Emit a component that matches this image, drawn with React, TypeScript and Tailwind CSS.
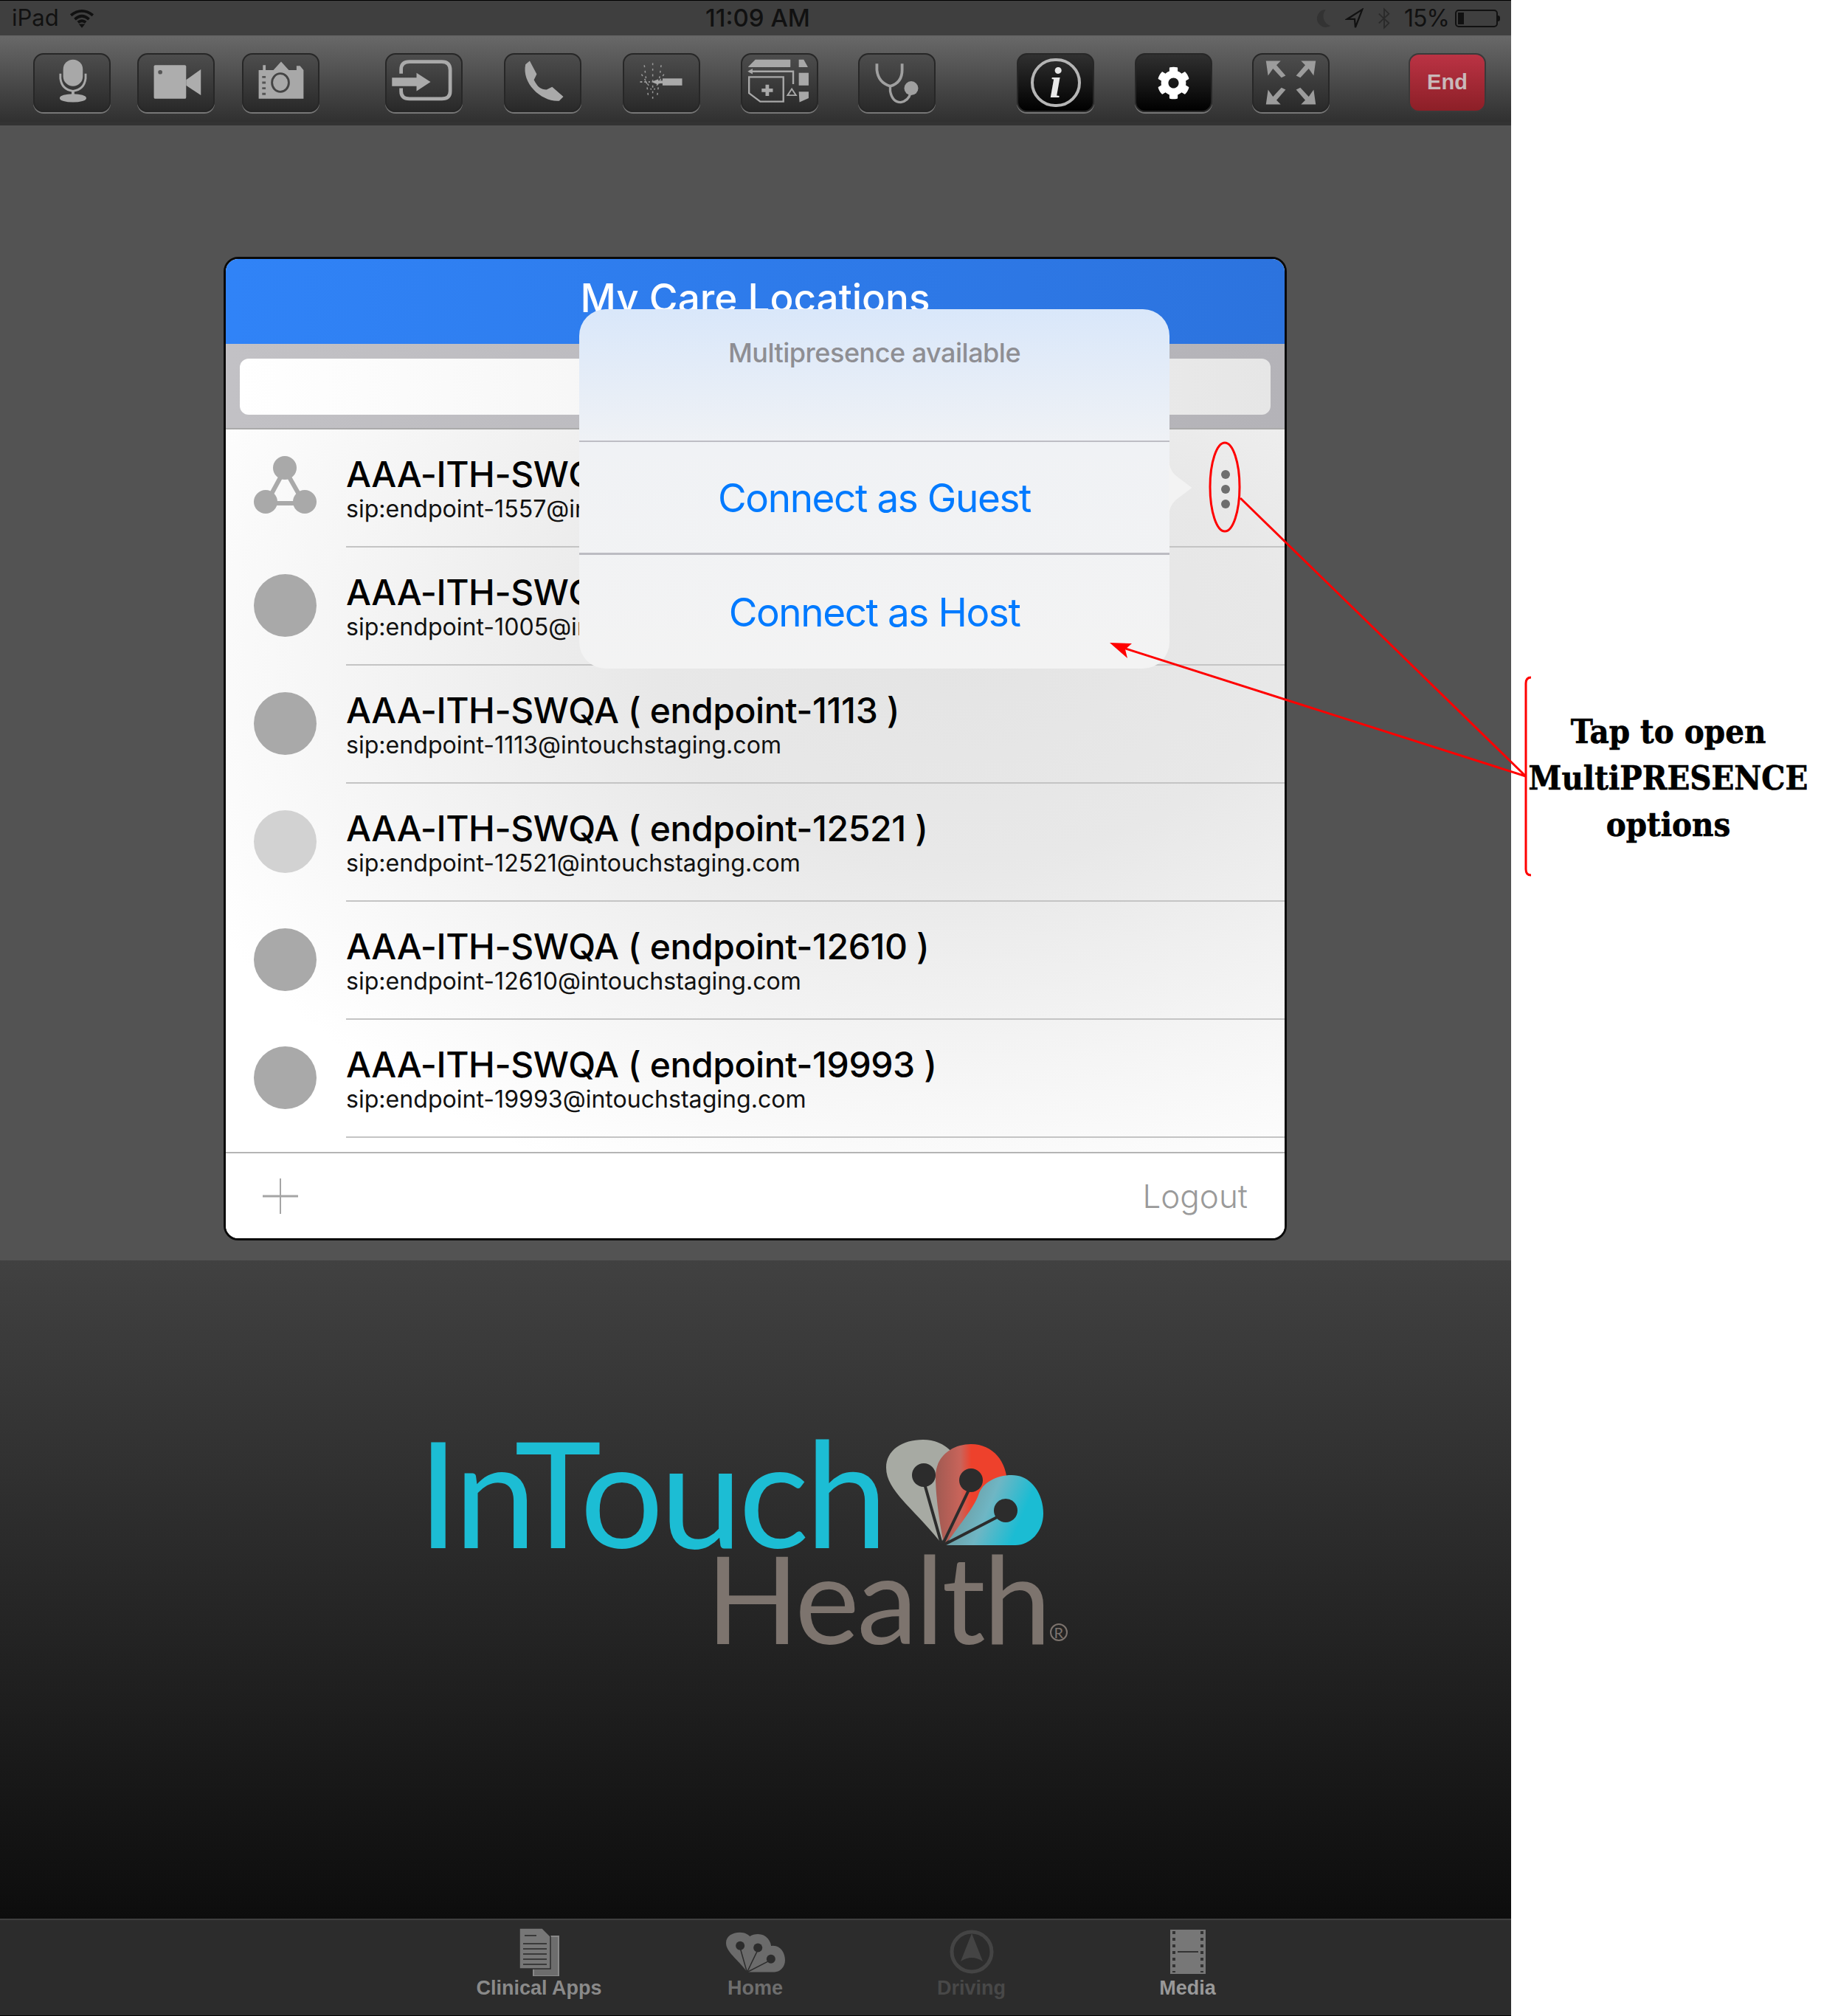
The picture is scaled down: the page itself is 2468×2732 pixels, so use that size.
import { FaCog } from "react-icons/fa";

const endpoints = [
  { id: "1557", multi: true },
  { id: "1005" },
  { id: "1113" },
  { id: "12521", light: true },
  { id: "12610" },
  { id: "19993" },
];

const Mic = () => (
  <svg viewBox="0 0 105 80" className="w-full h-full">
    <rect x="40" y="7" width="28" height="38" rx="14" fill="#a8a8a8" />
    <path d="M36 27V34Q38 50 54 52Q70 50 72 34V27" fill="none" stroke="#a8a8a8" strokeWidth="3" />
    <path d="M54 52V58" stroke="#a8a8a8" strokeWidth="4" />
    <ellipse cx="54" cy="62" rx="19" ry="6" fill="#a8a8a8" />
  </svg>
);

const Video = () => (
  <svg viewBox="0 0 105 80" className="w-full h-full">
    <rect x="21" y="15" width="46" height="48" rx="2" fill="#adadad" />
    <circle cx="30" cy="25" r="3" fill="#555" />
    <path d="M67 36L88 21V58L67 44Z" fill="#adadad" />
  </svg>
);

const Camera = () => (
  <svg viewBox="0 0 105 80" className="w-full h-full">
    <path d="M21 22H27V15H31V22H42L53 10L64 22H75V16H80L85 22V63H21Z" fill="#a8a8a8" />
    <ellipse cx="52" cy="40" rx="12" ry="13" fill="none" stroke="#444" strokeWidth="3" />
    <path d="M26 32H31M26 40H31M26 48H31M26 56H31" stroke="#555" strokeWidth="3" />
  </svg>
);

const Enter = () => (
  <svg viewBox="0 0 105 80" className="w-full h-full">
    <path d="M20 27V21Q20 10 32 10H78Q90 10 90 22V52Q90 63 78 63H32Q20 63 20 52V48" fill="none" stroke="#aaa" strokeWidth="5" />
    <path d="M7 33H42V26L62 39L42 52V45H7Z" fill="#aaa" />
  </svg>
);

const Phone = () => (
  <svg viewBox="0 0 105 80" className="w-full h-full">
    <path d="M34 9L44 28L40 36C45 46 50 50 58 50L66 46L82 60L76 66C52 68 22 42 28 14Z" fill="#aaa" />
  </svg>
);

const Burst = () => (
  <svg viewBox="0 0 105 80" className="w-full h-full">
    <path d="M40 12V66M28 15L34 62M52 15L46 62M24 28L38 50M56 28L42 50" stroke="#999" strokeWidth="1.6" strokeDasharray="3 5" />
    <path d="M22 39H36" stroke="#999" strokeWidth="2" strokeDasharray="3 3" />
    <rect x="54" y="34" width="28" height="10" fill="#aaa" />
    <path d="M38 39L48 35V37H54V41H48V43Z" fill="#aaa" />
  </svg>
);

const Medical = () => (
  <svg viewBox="0 0 105 80" className="w-full h-full">
    <path d="M8 17L18 7H68V18H8Z" fill="#a8a8a8" />
    <path d="M80 7H87L93 18H80Z" fill="#a8a8a8" />
    <rect x="80" y="26" width="14" height="18" fill="#a8a8a8" />
    <path d="M80 53H94V62L81 68Z" fill="#a8a8a8" />
    <path d="M72 42V24H12" fill="none" stroke="#a8a8a8" strokeWidth="2.5" />
    <path d="M7 24L14 20V28Z" fill="#a8a8a8" />
    <path d="M9 32H58V67H25L9 55Z" fill="none" stroke="#a8a8a8" strokeWidth="2.5" />
    <path d="M35 43V59M27 51H43" stroke="#a8a8a8" strokeWidth="5" />
    <path d="M70 49L76 58H64Z" fill="none" stroke="#a8a8a8" strokeWidth="2" />
  </svg>
);

const Stethoscope = () => (
  <svg viewBox="0 0 105 80" className="w-full h-full">
    <path d="M24 13V22Q26 40 43 45Q60 40 60 22V13" fill="none" stroke="#a0a0a0" strokeWidth="4" />
    <path d="M43 45V52Q46 68 58 68Q69 66 72 55" fill="none" stroke="#a0a0a0" strokeWidth="3.5" />
    <circle cx="73" cy="48" r="10" fill="#a0a0a0" />
  </svg>
);

const Expand = () => (
  <svg viewBox="0 0 105 80" className="w-full h-full">
    <g fill="#9c9c9c">
      <path d="M17 9H38L32 15L45 30L39 33L27 20L20 30Z" />
      <path d="M88 9H67L73 15L60 30L66 33L78 20L85 30Z" />
      <path d="M17 71H38L32 65L45 50L39 47L27 60L20 50Z" />
      <path d="M88 71H67L73 65L60 50L66 47L78 60L85 50Z" />
    </g>
  </svg>
);

const Info = () => (
  <div className="w-[68px] h-[66px] rounded-full border-[4px] border-[#b5b5b5] flex items-center justify-center">
    <span className="font-['Liberation_Serif',serif] italic font-bold text-[60px] leading-none text-[#e8e8e8]">i</span>
  </div>
);

const ToolButton = ({ className = "", active = false, children }: { className?: string; active?: boolean; children: React.ReactNode }) => (
  <div
    className={`w-[105px] h-[80px] rounded-[14px] border-2 border-[#272727] shadow-[0_2px_0_#777] flex items-center justify-center shrink-0 ${
      active ? "bg-[linear-gradient(180deg,#303030,#000000)]" : "bg-[linear-gradient(180deg,#4d4d4d,#292929)]"
    } ${className}`}
  >
    {children}
  </div>
);

const StatusBar = () => (
  <div className="h-[48px] bg-[#3f3f3f] border-t border-black flex items-center justify-between pl-[16px] pr-[15px] text-[#111] font-['Inter',sans-serif] text-[31px] shrink-0">
    <div className="flex items-center gap-[14px] w-[500px]">
      <span>iPad</span>
      <svg viewBox="0 0 32 24" className="w-[34px] h-[26px]">
        <path d="M2 8Q16 -3 30 8M7 13Q16 5 25 13M11 17Q16 13 21 17" fill="none" stroke="#111" strokeWidth="3.6" />
        <path d="M12 19H20L16 24Z" fill="#111" />
      </svg>
    </div>
    <span className="text-[33px] font-medium ml-[5px]">11:09 AM</span>
    <div className="flex items-center w-[500px] justify-end">
      <svg viewBox="0 0 24 30" className="w-[22px] h-[28px]">
        <path d="M15 2A13 13 0 1 0 22 26A15 15 0 0 1 15 2Z" fill="#333" />
      </svg>
      <svg viewBox="0 0 26 30" className="w-[26px] h-[28px] ml-[18px]">
        <path d="M24 2L2 16H13L14 28Z" fill="none" stroke="#111" strokeWidth="2.4" />
      </svg>
      <svg viewBox="0 0 20 34" className="w-[18px] h-[34px] ml-[18px]">
        <path d="M2 10L17 24L10 31V3L17 10L2 24" fill="none" stroke="#2a2a2a" strokeWidth="2" />
      </svg>
      <span className="ml-[18px] text-[32px] tracking-[-1px]">15%</span>
      <div className="flex items-center ml-[8px]">
        <div className="w-[58px] h-[24px] border-2 border-[#111] rounded-[5px] p-[2px]">
          <div className="w-[8px] h-full bg-[#111]" />
        </div>
        <div className="w-[3px] h-[8px] bg-[#111] rounded-r-sm" />
      </div>
    </div>
  </div>
);

const Toolbar = () => (
  <div className="h-[122px] border-t-2 border-[#666] bg-[linear-gradient(180deg,#686868,#303030)] border-b-[5px] border-b-[#333] flex items-start pt-[22px] pl-[45px] shrink-0">
    <ToolButton><Mic /></ToolButton>
    <ToolButton className="ml-[36px]"><Video /></ToolButton>
    <ToolButton className="ml-[37px]"><Camera /></ToolButton>
    <ToolButton className="ml-[89px]"><Enter /></ToolButton>
    <ToolButton className="ml-[56px]"><Phone /></ToolButton>
    <ToolButton className="ml-[56px]"><Burst /></ToolButton>
    <ToolButton className="ml-[55px]"><Medical /></ToolButton>
    <ToolButton className="ml-[54px]"><Stethoscope /></ToolButton>
    <ToolButton className="ml-[110px]" active><Info /></ToolButton>
    <ToolButton className="ml-[55px]" active><FaCog className="text-white text-[45px]" /></ToolButton>
    <ToolButton className="ml-[54px]"><Expand /></ToolButton>
    <div className="ml-[107px] w-[105px] h-[80px] rounded-[14px] border-2 border-[#3a3a3a] bg-[linear-gradient(180deg,#bb3344,#8c1f27)] flex items-center justify-center font-['Liberation_Sans',sans-serif] font-bold text-[29px] text-[#c9b9b9] shrink-0">
      End
    </div>
  </div>
);

const MultiIcon = () => (
  <svg viewBox="0 0 85 85" className="w-[85px] h-[85px]">
    <path d="M42 18L17 64H68Z" fill="none" stroke="#a9a9a9" strokeWidth="6" />
    <circle cx="42" cy="16" r="16" fill="#a9a9a9" />
    <circle cx="16" cy="62" r="16" fill="#a9a9a9" />
    <circle cx="69" cy="62" r="16" fill="#a9a9a9" />
  </svg>
);

const Row = ({ e }: { e: (typeof endpoints)[number] }) => (
  <div className="h-[160px] flex items-center pl-[38px] relative">
    <div className="w-[85px] shrink-0 mb-[4px]">
      {e.multi ? (
        <MultiIcon />
      ) : (
        <div className={`w-[85px] h-[85px] rounded-full ${e.light ? "bg-[#d2d2d2]" : "bg-[#a9a9a9]"}`} />
      )}
    </div>
    <div className="ml-[40px] flex-1 h-full border-b-2 border-[#c4c4c4] flex flex-col justify-center pt-[2px]">
      <div className="text-[48px] leading-[56px] font-medium text-black tracking-[-0.4px]">AAA-ITH-SWQA ( endpoint-{e.id} )</div>
      <div className="text-[32.1px] leading-[38px] text-[#111]">sip:endpoint-{e.id}@intouchstaging.com</div>
    </div>
    {e.multi && (
      <div className="absolute right-[74px] top-[55px] flex flex-col gap-[8px]">
        <span className="w-[12px] h-[12px] rounded-full bg-[#6e6e6e]" />
        <span className="w-[12px] h-[12px] rounded-full bg-[#6e6e6e]" />
        <span className="w-[12px] h-[12px] rounded-full bg-[#6e6e6e]" />
      </div>
    )}
  </div>
);

const Popover = () => (
  <div className="absolute left-[479px] top-[68px] w-[800px] h-[487px] rounded-[36px] bg-[linear-gradient(180deg,#d9e7fa_0%,#f0f2f5_38%,#f3f3f3_100%)] flex flex-col">
    <div className="h-[180px] border-b-2 border-[#bdbdc4] pt-[37px] text-center text-[36px] font-medium leading-[44px] tracking-[-0.5px] text-[#8e8e93]">
      Multipresence available
    </div>
    <div className="h-[153px] border-b-[3px] border-[#bcbcc2] flex items-center justify-center pt-[3px] text-[53px] tracking-[-1.4px] text-[#007aff]">Connect as Guest</div>
    <div className="flex-1 flex items-center justify-center pt-[3px] text-[53px] tracking-[-1.4px] text-[#007aff]">Connect as Host</div>
    <svg viewBox="0 0 40 84" className="absolute left-[799px] top-[200px] w-[37px] h-[84px]">
      <path d="M0 0Q0 14 10 24L34 42L10 60Q0 70 0 84Z" fill="#f3f3f3" />
    </svg>
  </div>
);

const Modal = () => (
  <div className="relative w-[1441px] h-[1333px] rounded-[20px] border-[3px] border-[#0a0a0a] overflow-hidden flex flex-col bg-white font-['Inter',sans-serif]">
    <div className="h-[115px] bg-[linear-gradient(90deg,#3083f7,#2c73de)] text-white text-center text-[53px] font-medium pt-[23px] leading-[60px] shrink-0">
      My Care Locations
    </div>
    <div className="h-[116px] bg-[linear-gradient(90deg,#c2c1c5,#b4b3b8)] border-b-2 border-[#aaa] px-[19px] pt-[20px] shrink-0">
      <div className="h-[76px] rounded-[12px] bg-[linear-gradient(90deg,#ffffff,#e6e6e6)]" />
    </div>
    <div className="flex-1 bg-[radial-gradient(ellipse_at_70%_30%,#e4e4e4_0%,#e8e8e8_30%,#ffffff_82%)]">
      {endpoints.map((e) => (
        <Row key={e.id} e={e} />
      ))}
    </div>
    <div className="h-[117px] border-t-2 border-[#b5b5b5] bg-white flex items-center justify-between pl-[50px] pr-[50px] shrink-0">
      <svg viewBox="0 0 48 48" className="w-[48px] h-[48px]">
        <path d="M24 0V48" stroke="#a5a5a5" strokeWidth="2" />
        <path d="M0 24H48" stroke="#a5a5a5" strokeWidth="3" />
      </svg>
      <span className="text-[44px] font-light text-[#9a9a9a]">Logout</span>
    </div>
    <Popover />
  </div>
);

const LogoMark = ({ mono }: { mono?: string }) => (
  <svg viewBox="0 0 213 145" className="w-full h-full">
    <defs>
      <linearGradient id="petalRed" x1="0" x2="1" y1="0" y2="0">
        <stop offset="0" stopColor="#a05a52" />
        <stop offset="0.35" stopColor="#c9645a" />
        <stop offset="0.5" stopColor="#ee412c" />
      </linearGradient>
      <linearGradient id="petalTeal" x1="0" x2="1" y1="0.3" y2="0.6">
        <stop offset="0" stopColor="#6d8e90" />
        <stop offset="0.45" stopColor="#6fb6c4" />
        <stop offset="0.8" stopColor="#1bbcd3" />
      </linearGradient>
    </defs>
    <path d="M75 141C40 95 0 70 0 38C0 14 22 0 50 0C80 0 100 22 100 45C100 80 85 110 75 141Z" fill={mono ?? "#a7aaa3"} />
    <path d="M78 141C70 100 67 70 67 50C67 22 90 6 115 6C145 6 164 30 164 60C164 85 110 115 78 141Z" fill={mono ?? "url(#petalRed)"} />
    <path d="M80 143C100 115 120 90 125 75C130 58 150 48 170 48C198 48 213 75 213 100C213 125 195 143 175 143Z" fill={mono ?? "url(#petalTeal)"} />
    <path d="M75 141L52 60M77 141L115 62M79 142L160 100" stroke="#2c2c2c" strokeWidth="4" />
    <ellipse cx="51" cy="48" rx="16" ry="16" fill="#2c2c2c" />
    <ellipse cx="115" cy="55" rx="16" ry="16" fill="#2c2c2c" />
    <ellipse cx="162" cy="96" rx="16" ry="16" fill="#2c2c2c" />
  </svg>
);

const Logo = () => (
  <div className="ml-[566px] mt-[238px] font-['Lato',sans-serif]">
    <div className="flex items-end h-[150px]">
      <span className="text-[#1cbdd4] text-[200px] leading-[150px] tracking-[-5px] w-[635px]">InTouch</span>
      <div className="w-[213px] h-[145px]">
        <LogoMark />
      </div>
    </div>
    <div className="flex items-end ml-[391px] mt-[8px]">
      <span className="text-[#7d746e] text-[165px] leading-[120px] tracking-[-3px]">Health</span>
      <span className="text-[#7d746e] text-[20px] leading-none ml-[1px] w-[24px] h-[24px] rounded-full border-2 border-[#7d746e] flex items-center justify-center">R</span>
    </div>
  </div>
);

const TabBar = () => (
  <div className="h-[132px] bg-[#2c2c2c] border-t-2 border-[#3f3f3f] border-b border-b-black flex pl-[584px] font-['Liberation_Sans',sans-serif] font-bold text-[27px] shrink-0">
    <div className="w-[293px] flex flex-col items-center pt-[10px] text-[#8a8a8a]">
      <svg viewBox="0 0 56 66" className="w-[56px] h-[66px]">
        <path d="M20 12H54V66H20Z" fill="#6d6d6d" stroke="#888" strokeWidth="2" />
        <path d="M1 1H32L43 12V56H1Z" fill="#777" stroke="#2c2c2c" strokeWidth="1.5" />
        <path d="M8 11H24M6 22H38M6 29H38M6 36H38M6 43H38M6 50H38" stroke="#3a3a3a" strokeWidth="2" />
      </svg>
      <span className="leading-[32px]">Clinical Apps</span>
    </div>
    <div className="w-[293px] flex flex-col items-center pt-[10px] text-[#6e6e6e]">
      <div className="w-[80px] h-[56px] mt-[6px] mb-[4px]">
        <LogoMark mono="#6b6b6b" />
      </div>
      <span className="leading-[32px]">Home</span>
    </div>
    <div className="w-[293px] flex flex-col items-center pt-[10px] text-[#484848]">
      <svg viewBox="0 0 66 66" className="w-[66px] h-[66px]">
        <circle cx="33" cy="33" r="27" fill="none" stroke="#444" strokeWidth="5" />
        <path d="M33 8L48 46Q33 36 18 46Z" fill="#444" />
      </svg>
      <span className="leading-[32px]">Driving</span>
    </div>
    <div className="w-[293px] flex flex-col items-center pt-[10px] text-[#999]">
      <svg viewBox="0 0 48 66" className="w-[48px] h-[66px]">
        <rect x="0" y="3" width="48" height="60" fill="#777" />
        <path d="M5 5V61M43 5V61" stroke="#333" strokeWidth="4" strokeDasharray="4 5" />
        <path d="M10 33H38" stroke="#333" strokeWidth="2" />
      </svg>
      <span className="leading-[32px]">Media</span>
    </div>
  </div>
);

const Annotation = () => (
  <svg viewBox="0 0 2468 2732" className="absolute inset-0 w-[2468px] h-[2732px] pointer-events-none">
    <g fill="none" stroke="#ff0000" strokeWidth="3">
      <ellipse cx="1660" cy="660" rx="20" ry="60" />
      <path d="M1681 675L2068 1052L1510 874" />
      <path d="M2075 918Q2068 918 2068 926V1178Q2068 1186 2075 1186" />
    </g>
    <path d="M1504 871L1534 872L1525 880L1528 892Z" fill="#ff0000" />
  </svg>
);

const App = () => {
  return (
    <div className="relative w-[2468px] h-[2732px] bg-white overflow-hidden flex">
      <div className="w-[2048px] h-full flex flex-col shrink-0">
        <StatusBar />
        <Toolbar />
        <div className="h-[1538px] bg-[#535353] pt-[178px] pl-[303px] shrink-0">
          <Modal />
        </div>
        <div className="flex-1 bg-[linear-gradient(180deg,#414141,#0d0d0d)] overflow-hidden">
          <Logo />
        </div>
        <TabBar />
      </div>
      <div className="flex-1 pt-[960px] pl-[6px] text-center font-['DejaVu_Serif_Condensed','DejaVu_Serif',serif] font-bold text-[45px] leading-[63px] text-black whitespace-nowrap [-webkit-text-stroke:0.6px_#000]">
        <div>Tap to open</div>
        <div>MultiPRESENCE</div>
        <div>options</div>
      </div>
      <Annotation />
    </div>
  );
};

export default App;
